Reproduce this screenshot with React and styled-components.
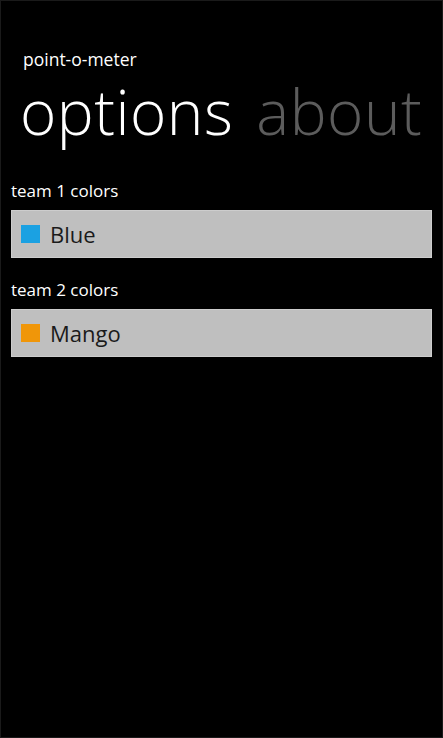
import React from "react";
import styled, { createGlobalStyle } from "styled-components";

const GlobalStyle = createGlobalStyle`
  html, body {
    margin: 0;
    padding: 0;
    background: #000000;
  }
  body {
    font-family: "Open Sans", "Noto Sans", sans-serif;
  }
`;

const Screen = styled.div`
  box-sizing: border-box;
  width: 443px;
  height: 738px;
  background: #000000;
  border: 1px solid #1a1a1a;
  color: #ffffff;
  display: flex;
  flex-direction: column;
`;

const AppTitle = styled.div`
  font-size: 17.5px;
  line-height: 20px;
  margin: 48px 0 0 22px;
`;

const PivotHeaders = styled.div`
  display: flex;
  gap: 23px;
  margin: 4px 0 0 19px;
`;

const PivotHeader = styled.div`
  font-size: 62px;
  font-weight: 300;
  line-height: 76px;
  letter-spacing: 0.5px;
  color: ${p => (p.active ? "#ffffff" : "#5c5c5c")};
`;

const Content = styled.div`
  display: flex;
  flex-direction: column;
  padding: 31px 10px 0 10px;
`;

const Section = styled.div`
  display: flex;
  flex-direction: column;
  margin-bottom: 21px;
`;

const Label = styled.div`
  font-size: 17px;
  line-height: 22px;
  margin-bottom: 8px;
`;

const Picker = styled.div`
  box-sizing: border-box;
  height: 48px;
  background: #bfbfbf;
  border: 1px solid #cdcdcd;
  display: flex;
  align-items: center;
  padding-left: 9px;
  gap: 10px;
  color: #1a1a1a;
  font-size: 22px;
`;

const Swatch = styled.span`
  width: 19px;
  height: 18px;
  background: ${p => p.color};
`;

const ColorPicker = ({ label, name, color }) => (
  <Section>
    <Label>{label}</Label>
    <Picker>
      <Swatch color={color} />
      {name}
    </Picker>
  </Section>
);

const App = () => (
  <Screen>
    <GlobalStyle />
    <AppTitle>point-o-meter</AppTitle>
    <PivotHeaders>
      <PivotHeader active>options</PivotHeader>
      <PivotHeader>about</PivotHeader>
    </PivotHeaders>
    <Content>
      <ColorPicker label="team 1 colors" name="Blue" color="#1ba1e2" />
      <ColorPicker label="team 2 colors" name="Mango" color="#f09609" />
    </Content>
  </Screen>
);

export default App;
